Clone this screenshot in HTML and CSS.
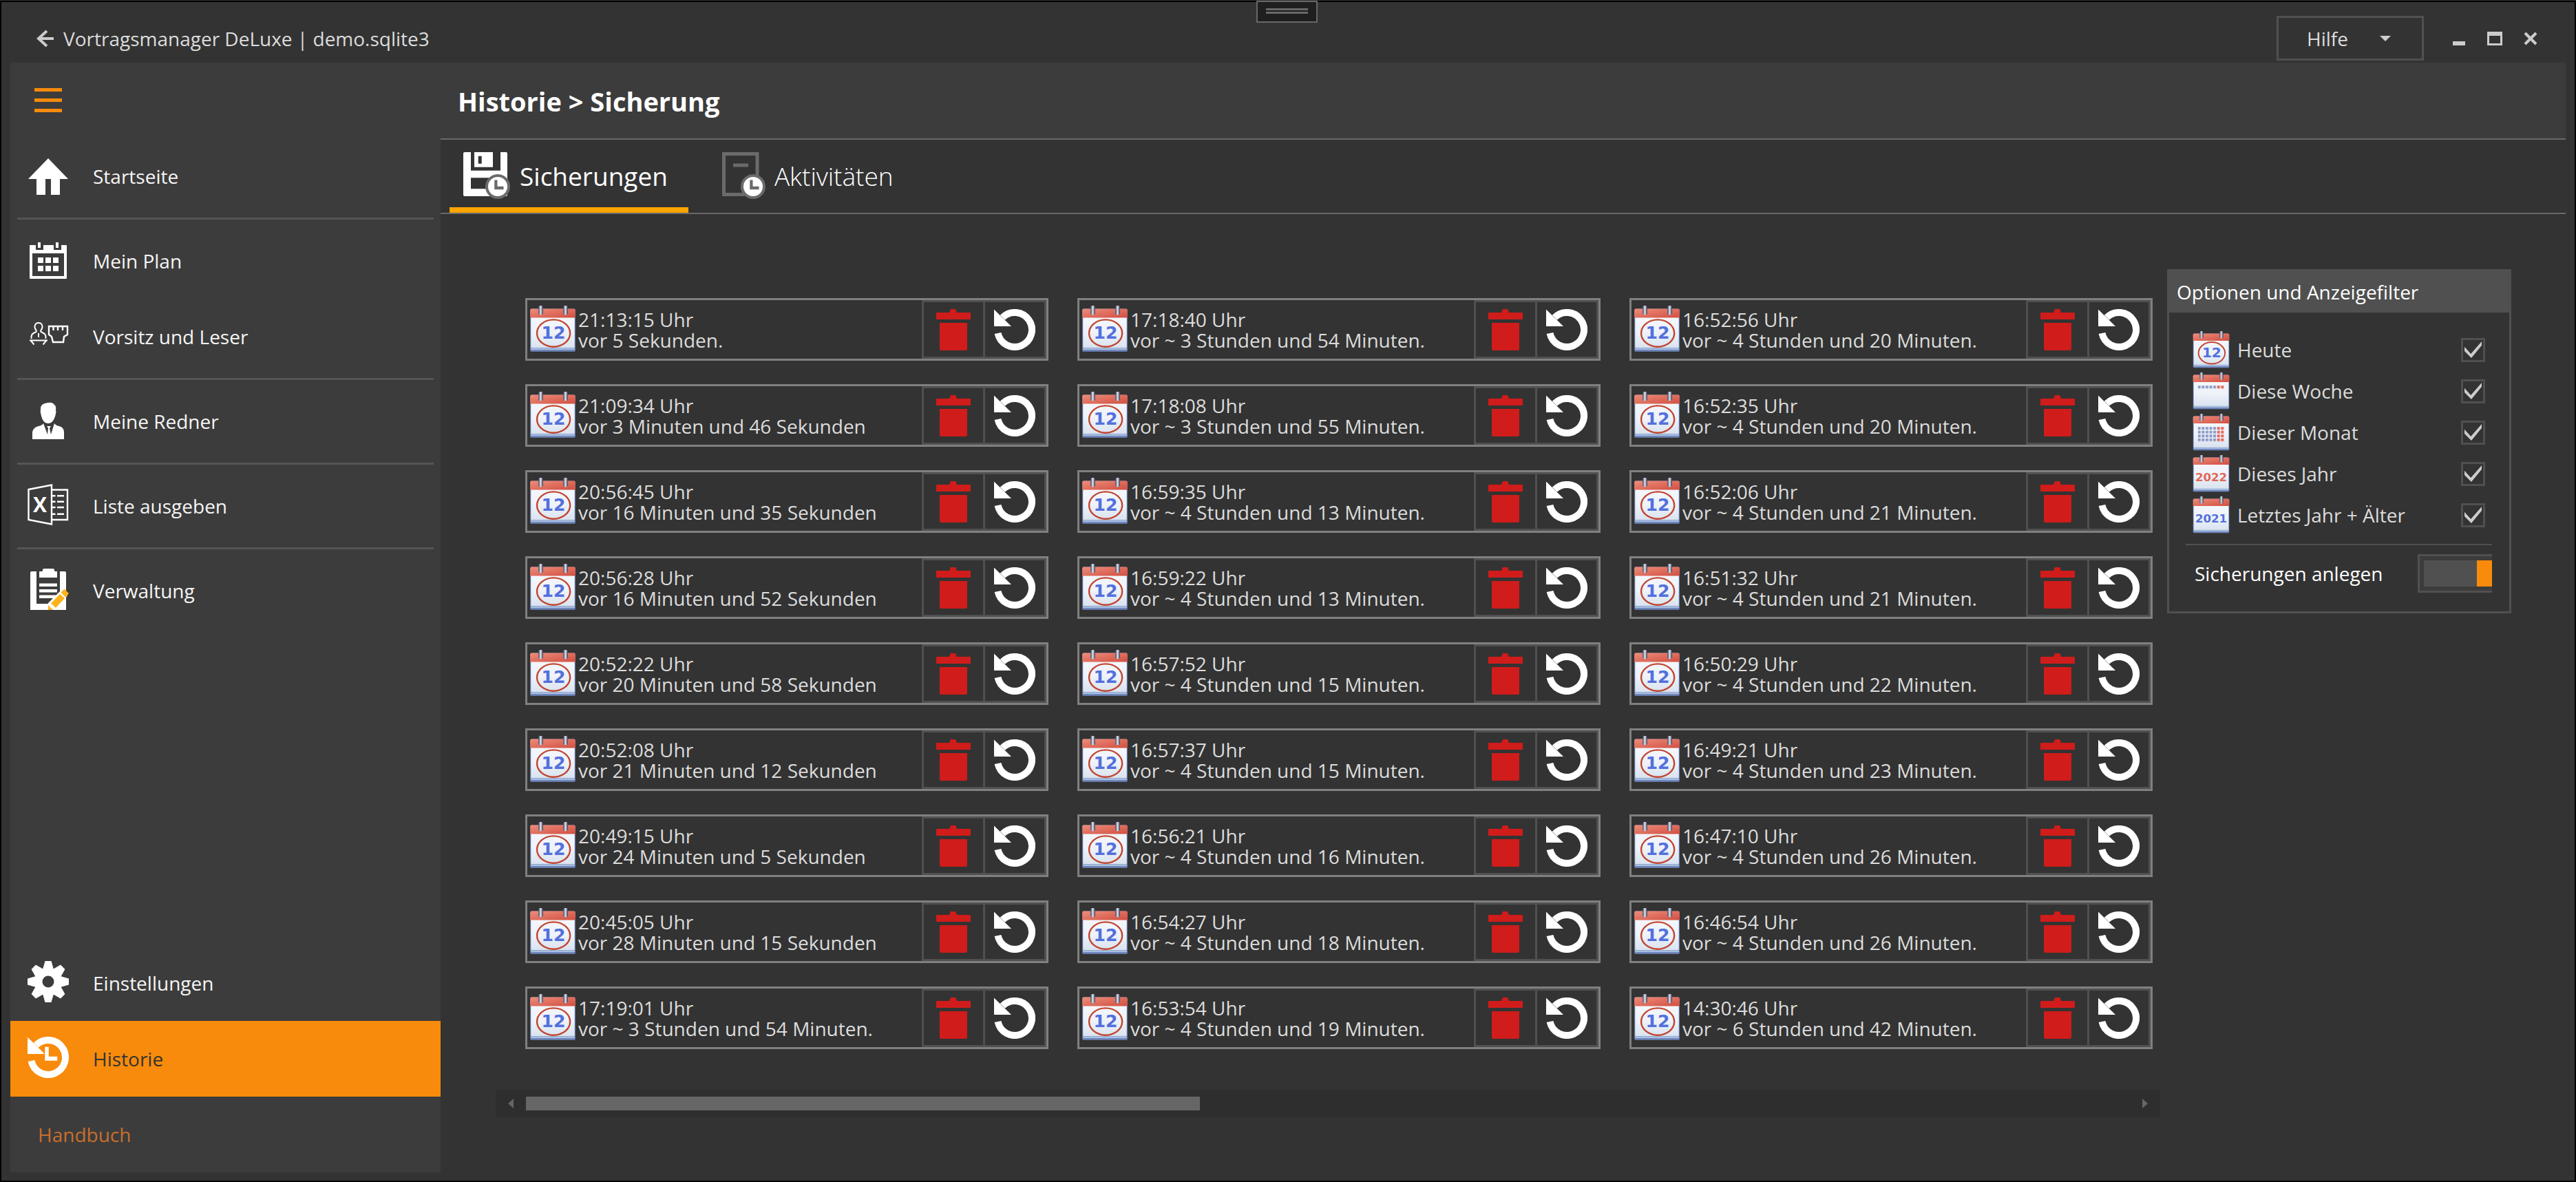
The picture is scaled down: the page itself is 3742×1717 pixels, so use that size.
FILE: index.html
```html
<!DOCTYPE html>
<html lang="de">
<head>
<meta charset="utf-8">
<meta name="viewport" content="width=device-width, initial-scale=1">
<title>Vortragsmanager DeLuxe | demo.sqlite3</title>
<link rel="stylesheet" href="styles.css">
</head>
<body>
<svg class="defs" aria-hidden="true">
  <defs>
    <linearGradient id="paper" x1="0" y1="0" x2="0" y2="1">
      <stop offset="0" stop-color="#f4f7fc"/><stop offset=".5" stop-color="#eef2f9"/><stop offset="1" stop-color="#d9e3ef"/>
    </linearGradient>
    <linearGradient id="band" x1="0" y1="0" x2="1" y2="1">
      <stop offset="0" stop-color="#ee8d7b"/><stop offset="1" stop-color="#d14f41"/>
    </linearGradient>
    <linearGradient id="ring" x1="0" y1="0" x2="1" y2="0">
      <stop offset="0" stop-color="#3c4a66"/><stop offset=".5" stop-color="#dfe6f2"/><stop offset="1" stop-color="#3c3040"/>
    </linearGradient>
    <pattern id="days" x="10" y="23" width="6.4" height="6.4" patternUnits="userSpaceOnUse"><rect width="4.6" height="4.6" fill="#8d9cc4"/></pattern>
    <pattern id="weekend" x="10" y="23" width="6.4" height="6.4" patternUnits="userSpaceOnUse"><rect width="4.6" height="4.6" fill="#e2695a"/></pattern>
  </defs>
  <symbol id="cal" viewBox="0 0 64 64">
    <rect x="2" y="5" width="60" height="57" rx="2" fill="#6f86bd"/>
    <rect x="3" y="16" width="58" height="41" fill="url(#paper)"/>
    <path d="M3 58.5h58" stroke="#a9c0e0" stroke-width="2"/>
    <path d="M2 17V7q0-2 2-2h56q2 0 2 2v10z" fill="url(#band)"/>
    <rect x="13" y="1" width="6" height="12" rx="2" fill="url(#ring)"/>
    <rect x="46" y="1" width="6" height="12" rx="2" fill="url(#ring)"/>
  </symbol>
  <symbol id="cal-circled" viewBox="0 0 64 64">
    <use href="#cal"/>
    <ellipse cx="33" cy="37.500" rx="22" ry="18" fill="none" stroke="#c2452f" stroke-width="2.200"/>
  </symbol>
  <symbol id="cal-week" viewBox="0 0 64 64">
    <use href="#cal"/>
    <rect x="10" y="23" width="32" height="6" fill="url(#days)"/>
    <rect x="42" y="23" width="12" height="6" fill="url(#weekend)"/>
  </symbol>
  <symbol id="cal-month" viewBox="0 0 64 64">
    <use href="#cal"/>
    <rect x="10" y="23" width="32" height="25" fill="url(#days)"/>
    <rect x="42" y="23" width="12" height="25" fill="url(#weekend)"/>
  </symbol>
  <symbol id="bin" viewBox="0 0 50 60">
    <path fill="#d01c1a" d="M19 5l2-5h7l2 5h19q1 0 1 1v9H0V6q0-1 1-1zM5 20h40v38q0 2-2 2H7q-2 0-2-2z"/>
  </symbol>
  <symbol id="undo" viewBox="0 0 60 60">
    <path fill="none" stroke="#fff" stroke-width="10" d="M5.500 35A25 25 0 1 0 12.300 12.300"/>
    <path fill="#fff" d="M0 .5V25h25z"/>
  </symbol>
  <symbol id="clock-badge" viewBox="0 0 36 36">
    <circle cx="18" cy="18" r="16" fill="#fff" stroke="#6b6b6b" stroke-width="4"/>
    <path fill="#6b6b6b" d="M13.200 8.500h4.300v9.300h9v4.400H13.200z"/>
  </symbol>
</svg>

<div class="window">
  <button class="grip" type="button" aria-label="Leiste einblenden"></button>

  <header class="titlebar">
    <button class="bare back" type="button" aria-label="Zurück">
      <svg width="26" height="26" viewBox="0 0 26 26"><path fill="none" stroke="#ccc" stroke-width="4" d="M15 2L3 13l12 11M3 13h22"/></svg>
    </button>
    <span class="app-name">Vortragsmanager DeLuxe | demo.sqlite3</span>
    <button class="help" type="button">Hilfe
      <svg width="16" height="8" viewBox="0 0 16 8"><path fill="#ccc" d="M0 0h16L8 8z"/></svg>
    </button>
    <div class="window-buttons">
      <button class="bare" type="button" aria-label="Minimieren"><svg width="22" height="20" viewBox="0 0 22 20"><path fill="#ccc" d="M2 14h18v6H2z"/></svg></button>
      <button class="bare" type="button" aria-label="Maximieren"><svg width="22" height="20" viewBox="0 0 22 20"><path fill="#ccc" fill-rule="evenodd" d="M0 0h22v20H0zM3 6v11h16V6z"/></svg></button>
      <button class="bare" type="button" aria-label="Schließen"><svg width="22" height="20" viewBox="0 0 22 20"><path stroke="#ccc" stroke-width="4" d="M3 2l16 16M19 2L3 18"/></svg></button>
    </div>
  </header>

  <div class="body">
    <nav class="sidebar">
      <button class="bare burger" type="button" aria-label="Menü">
        <svg width="40" height="36" viewBox="0 0 40 36"><path fill="#f88b0b" d="M0 0h40v5H0zM0 15h40v5H0zM0 30h40v5H0z"/></svg>
      </button>
      <a class="item" href="#startseite">
        <svg class="icon" viewBox="0 0 60 60"><path fill="#fff" d="M30 6l29 30H47v23H34V36h-8v23H13V36H1z"/></svg>
        Startseite</a>
      <hr>
      <a class="item" href="#plan">
        <svg class="icon" viewBox="0 0 60 60"><path fill="#fff" fill-rule="evenodd" d="M4 9h8v7h11V9h15v7h11V9h7q1 0 1 1v47q0 1-1 1H4q-1 0-1-1V10q0-1 1-1zM7 21v33h46V21zM15 27h8v8h-8zM26 27h8v8h-8zM37 27h8v8h-8zM15 39h8v8h-8zM26 39h8v8h-8zM37 39h8v8h-8z"/><path fill="#fff" d="M15 5h4v8h-4zM41 5h4v8h-4z"/></svg>
        Mein Plan</a>
      <a class="item" href="#vorsitz">
        <svg class="icon" viewBox="0 0 60 60"><g fill="none" stroke="#fff" stroke-width="2"><path d="M5.700 35q-1-6 3-8l4-2v-2q-3-4-2-7 1-4 5.300-4t5.300 4q1 3-2 7v2l4 2q4 2 3 8M16 27v6M3 37.500h26M5 38l4.500 5.500M27 38l-4.500 5.500"/><path stroke-width="2.400" d="M31 17h27v12l-5 3-1 8H37l-2-8-4-3zM37.500 17v6M44 17v6M51 17v6"/></g></svg>
        Vorsitz und Leser</a>
      <hr>
      <a class="item" href="#redner">
        <svg class="icon" viewBox="0 0 60 60"><path fill="#fff" d="M30 5q6-1 9 3 3 2 2 8 1 2 0 5-3 14-11 14-8 0-10.500-13-1.500-4-.5-7-1-9 11-10zM7 58V48q1-7 9-9 5-1 7-4l6 16 1-9-2-3h6l-2 3 2 9 5-16q2 3 7 4 7 2 7 9v10z"/></svg>
        Meine Redner</a>
      <hr>
      <a class="item" href="#liste">
        <svg class="icon" viewBox="0 0 60 60"><path fill="none" stroke="#fff" stroke-width="2.400" d="M1.500 8L35 1.500v57L1.500 52zM35 8.500h23v43.500H35M35 17.300h5.500M43 17.300h10M35 25.700h5.500M43 25.700h10M35 34h5.500M43 34h10M35 43.700h5.500M43 43.700h10"/><text x="18" y="41" font-size="30" font-weight="700" text-anchor="middle" fill="#fff">X</text></svg>
        Liste ausgeben</a>
      <hr>
      <a class="item" href="#verwaltung">
        <svg class="icon" viewBox="0 0 60 60"><path fill="#fff" d="M4 60V6q0-2 2-2h7v47h34V4h7q2 0 2 2v54zM17 4h4q1 0 1-2t2-2h13q2 0 2 2t1 2h3v9H17zM17 21.500h26V26H17zM17 30h26v4.500H17zM17 38.500h26V43H17z"/><path fill="#fff" d="M30 50l20-20 8 9-17 21H30z"/><path fill="#ffb31a" d="M30 53v7h7zM34 50.500L47 37l7 6-13 14zM48.500 34.500l5-5 6.500 6.500-5 5.500z"/></svg>
        Verwaltung</a>

      <a class="item push" href="#einstellungen">
        <svg class="icon" viewBox="0 0 60 60">
          <g fill="#fff"><path id="teeth" d="M25.500 0h9l4 14v32l-4 14h-9l-4-14V14z"/><use href="#teeth" transform="rotate(45 30 30)"/><use href="#teeth" transform="rotate(90 30 30)"/><use href="#teeth" transform="rotate(135 30 30)"/><circle cx="30" cy="30" r="20"/></g>
          <circle cx="30" cy="30" r="8.500" fill="#3c3c3c"/></svg>
        Einstellungen</a>
      <a class="item active" href="#historie" aria-current="page">
        <svg class="icon" viewBox="0 0 60 60"><use href="#undo"/><path fill="#fff" stroke="#f88b0b" stroke-width="1.500" d="M24.500 14h7v14H44v7.500H24.500z"/></svg>
        Historie</a>
      <a class="item manual" href="#handbuch">Handbuch</a>
    </nav>

    <main class="page">
      <h1 class="page-title">Historie &gt; Sicherung</h1>
      <div class="tabs" role="tablist">
        <button class="tab selected" type="button" role="tab" aria-selected="true">
          <svg width="70" height="70" viewBox="0 0 70 70"><path fill="#fff" fill-rule="evenodd" d="M2 0h9v26.700h43V0h8q2 0 2 2v60q0 2-2 2H2q-2 0-2-2V2q0-2 2-2zM11 37.300v16h43v-16zM16 0h27v21.700H16zM21.700 5.700v11h5v-11z"/><use href="#clock-badge" x="32" y="32" width="36" height="36"/></svg>
          Sicherungen</button>
        <button class="tab" type="button" role="tab" aria-selected="false">
          <svg width="64" height="70" viewBox="0 0 64 70"><path fill="none" stroke="#6b6b6b" stroke-width="5" d="M2.500 2.500h48.500v59H2.500zM16 19h22"/><use href="#clock-badge" x="27" y="32" width="36" height="36"/></svg>
          Aktivitäten</button>
      </div>

      <div class="content">
        <section class="backups" aria-label="Sicherungen">
          <div class="grid" id="backup-grid"></div>
          <div class="scrollbar" role="scrollbar" aria-controls="backup-grid" aria-orientation="horizontal" aria-valuenow="0">
            <svg width="8" height="14" viewBox="0 0 8 14"><path fill="#666" d="M8 0v14L0 7z"/></svg>
            <div class="track"><div class="thumb"></div></div>
            <svg width="8" height="14" viewBox="0 0 8 14"><path fill="#666" d="M0 0v14l8-7z"/></svg>
          </div>
        </section>

        <section class="options">
          <h2>Optionen und Anzeigefilter</h2>
          <div class="options-body">
            <label class="filter"><svg class="cal" viewBox="0 0 64 64"><use href="#cal-circled"/><text class="day" x="33" y="45">12</text></svg>Heute<input class="check" type="checkbox" checked></label>
            <label class="filter"><svg class="cal" viewBox="0 0 64 64"><use href="#cal-week"/></svg>Diese Woche<input class="check" type="checkbox" checked></label>
            <label class="filter"><svg class="cal" viewBox="0 0 64 64"><use href="#cal-month"/></svg>Dieser Monat<input class="check" type="checkbox" checked></label>
            <label class="filter"><svg class="cal" viewBox="0 0 64 64"><use href="#cal"/><text class="year current" x="32" y="45">2022</text></svg>Dieses Jahr<input class="check" type="checkbox" checked></label>
            <label class="filter"><svg class="cal" viewBox="0 0 64 64"><use href="#cal"/><text class="year" x="32" y="45">2021</text></svg>Letztes Jahr + Älter<input class="check" type="checkbox" checked></label>
            <label class="create">Sicherungen anlegen<input class="switch" type="checkbox" role="switch" checked></label>
          </div>
        </section>
      </div>
    </main>
  </div>
</div>
<script src="script.js"></script>
</body>
</html>
```
FILE: styles.css
```css
* { box-sizing: border-box; }

body {
  display: flow-root;
  margin: 0;
  background: #333;
  color: #dcdcdc;
  font-family: "Segoe UI", "Open Sans", "Noto Sans", sans-serif;
  font-size: 28px;
  line-height: 30px;
}

button { font: inherit; color: inherit; cursor: pointer; }
svg { display: block; flex: none; }
.defs { position: absolute; width: 0; height: 0; }

.cal text { font-family: "DejaVu Sans", sans-serif; font-weight: 700; text-anchor: middle; fill: #5470dc; }
.cal .day { font-size: 23px; }
.cal .year { font-size: 19px; }
.cal .year.current { fill: #e0685a; }

.bare { display: flex; align-items: center; justify-content: center; padding: 0; border: 0; background: none; }

/* Window frame */
.window {
  display: flex;
  flex-direction: column;
  min-height: calc(100vh - 1px);
  margin-top: 1px;
  padding: 0 13px 12px;
  border: 2px solid #000;
}

.grip {
  position: absolute;
  top: 1px;
  left: 50%;
  width: 89px;
  height: 32px;
  margin-left: -46px;
  padding: 9px 12px 11px;
  border: 2px solid #686868;
  background: linear-gradient(#686868 3px, #1f1f1f 3px 5px, #686868 5px) content-box, #1f1f1f;
}

.titlebar { display: flex; align-items: center; height: 88px; padding: 17px 25px 0 38px; }
.back { margin-right: 13px; }
.app-name { flex: 1; }

.help {
  display: flex;
  align-items: center;
  justify-content: space-between;
  width: 214px;
  height: 65px;
  padding: 0 45px 0 41px;
  border: 3px solid #505050;
  background: #333;
}

.window-buttons { display: flex; margin-left: 25px; }
.window-buttons button { width: 52px; height: 40px; }

.body { display: flex; flex: 1; }

/* Navigation */
.sidebar { display: flex; flex-direction: column; flex: none; width: 625px; background: #3c3c3c; }
.burger { align-self: flex-start; height: 110px; padding: 0 35px; }
.sidebar hr { height: 3px; margin: 5px 10px; border: 0; background: #555; }

.item {
  display: flex;
  align-items: center;
  gap: 35px;
  height: 110px;
  padding: 0 25px;
  color: #f5f5f5;
  text-decoration: none;
}

.item .icon { width: 60px; height: 60px; margin-bottom: 4px; }
.item.push { margin-top: auto; }
.item.active { background: #f88b0b; color: #333; }
.item.manual { padding-left: 40px; color: #c86e2c; }

/* Page */
.page { display: flex; flex-direction: column; flex: 1; min-width: 0; }

.page-title {
  margin: 0;
  padding: 32px 25px 30px;
  border-bottom: 2px solid #686868;
  background: #3c3c3c;
  color: #fff;
  font-size: 38px;
  font-weight: 700;
  line-height: 48px;
}

.tabs { display: flex; gap: 29px; padding: 0 13px; border-bottom: 2px solid #686868; }

.tab {
  display: flex;
  align-items: center;
  gap: 12px;
  height: 106px;
  padding: 0 30px 0 20px;
  border: 0;
  background: none;
  color: #fff;
  font-size: 37px;
  font-weight: 300;
}

.tab.selected { box-shadow: inset 0 -8px #ffa500; font-weight: 400; }

.content { display: flex; align-items: stretch; flex: 1; gap: 10px; padding: 80px 79px 80px 80px; }

/* Backup cards */
.backups { display: flex; flex-direction: column; flex: 1; min-width: 0; }

.grid {
  display: grid;
  grid-auto-flow: column;
  grid-template-rows: repeat(9, auto);
  grid-auto-columns: 1fr;
  gap: 34px 42px;
  padding: 42px 11px 59px 43px;
}

.card { display: flex; align-items: stretch; height: 91px; padding-left: 2px; border: 3px solid #808080; }
.card .cal { align-self: center; width: 70px; height: 70px; margin-bottom: 2px; }
.card p { flex: 1; align-self: center; margin: 0 0 0 2px; white-space: nowrap; }
.card time { display: block; }

.card button { width: 92px; border: 3px solid #505050; }
.card button + button { margin-left: -3px; }

.scrollbar { display: flex; align-items: center; gap: 18px; height: 40px; margin-top: auto; padding: 0 18px; background: #2e2e2e; }
.scrollbar .track { flex: 1; }
.scrollbar .thumb { width: 42%; height: 20px; background: #666; }

/* Options */
.options { align-self: flex-start; flex: none; width: 500px; border: 3px solid #505050; }

.options h2 {
  margin: 0;
  padding: 15px 11px;
  background: #505050;
  color: #fff;
  font-size: 28px;
  font-weight: 400;
  line-height: 30px;
}

.options-body { padding: 24px 25px 27px 24px; }
.filter { display: flex; align-items: center; gap: 10px; height: 60px; padding: 0 10px 0 9px; }
.filter .cal { width: 56px; height: 56px; }

.check {
  display: grid;
  place-items: center;
  width: 35px;
  height: 35px;
  margin: 0 0 0 auto;
  border: 3px solid #505050;
  appearance: none;
}

.check:checked::before {
  content: "";
  width: 25px;
  height: 24px;
  background: #ccc;
  clip-path: polygon(0 32%, 37% 75%, 100% 0, 100% 24%, 40% 100%, 0 58%);
}

.create {
  display: flex;
  align-items: center;
  justify-content: space-between;
  margin-top: 12px;
  padding: 13px 0 0 13px;
  border-top: 2px solid #505050;
  color: #fff;
}

.switch {
  width: 108px;
  height: 56px;
  margin: 0;
  padding: 6px 0 6px 6px;
  border: 3px solid #505050;
  border-right: 0;
  appearance: none;
  background: linear-gradient(to left, #f88b0b 22px, #505050 22px) content-box, #3c3c3c;
}
```
FILE: script.js
```js
// Backups, newest first; the grid fills column by column.
const backups = [
  ["21:13:15", "vor 5 Sekunden."],
  ["21:09:34", "vor 3 Minuten und 46 Sekunden"],
  ["20:56:45", "vor 16 Minuten und 35 Sekunden"],
  ["20:56:28", "vor 16 Minuten und 52 Sekunden"],
  ["20:52:22", "vor 20 Minuten und 58 Sekunden"],
  ["20:52:08", "vor 21 Minuten und 12 Sekunden"],
  ["20:49:15", "vor 24 Minuten und 5 Sekunden"],
  ["20:45:05", "vor 28 Minuten und 15 Sekunden"],
  ["17:19:01", "vor ~ 3 Stunden und 54 Minuten."],
  ["17:18:40", "vor ~ 3 Stunden und 54 Minuten."],
  ["17:18:08", "vor ~ 3 Stunden und 55 Minuten."],
  ["16:59:35", "vor ~ 4 Stunden und 13 Minuten."],
  ["16:59:22", "vor ~ 4 Stunden und 13 Minuten."],
  ["16:57:52", "vor ~ 4 Stunden und 15 Minuten."],
  ["16:57:37", "vor ~ 4 Stunden und 15 Minuten."],
  ["16:56:21", "vor ~ 4 Stunden und 16 Minuten."],
  ["16:54:27", "vor ~ 4 Stunden und 18 Minuten."],
  ["16:53:54", "vor ~ 4 Stunden und 19 Minuten."],
  ["16:52:56", "vor ~ 4 Stunden und 20 Minuten."],
  ["16:52:35", "vor ~ 4 Stunden und 20 Minuten."],
  ["16:52:06", "vor ~ 4 Stunden und 21 Minuten."],
  ["16:51:32", "vor ~ 4 Stunden und 21 Minuten."],
  ["16:50:29", "vor ~ 4 Stunden und 22 Minuten."],
  ["16:49:21", "vor ~ 4 Stunden und 23 Minuten."],
  ["16:47:10", "vor ~ 4 Stunden und 26 Minuten."],
  ["16:46:54", "vor ~ 4 Stunden und 26 Minuten."],
  ["14:30:46", "vor ~ 6 Stunden und 42 Minuten."]
];

document.getElementById("backup-grid").innerHTML = backups.map(([time, age]) => `
  <article class="card">
    <svg class="cal" viewBox="0 0 64 64"><use href="#cal-circled"/><text class="day" x="33" y="45">12</text></svg>
    <p><time>${time} Uhr</time>${age}</p>
    <button class="bare" type="button" aria-label="Löschen"><svg width="50" height="60"><use href="#bin"/></svg></button>
    <button class="bare" type="button" aria-label="Wiederherstellen"><svg width="60" height="60"><use href="#undo"/></svg></button>
  </article>`).join("");
```
